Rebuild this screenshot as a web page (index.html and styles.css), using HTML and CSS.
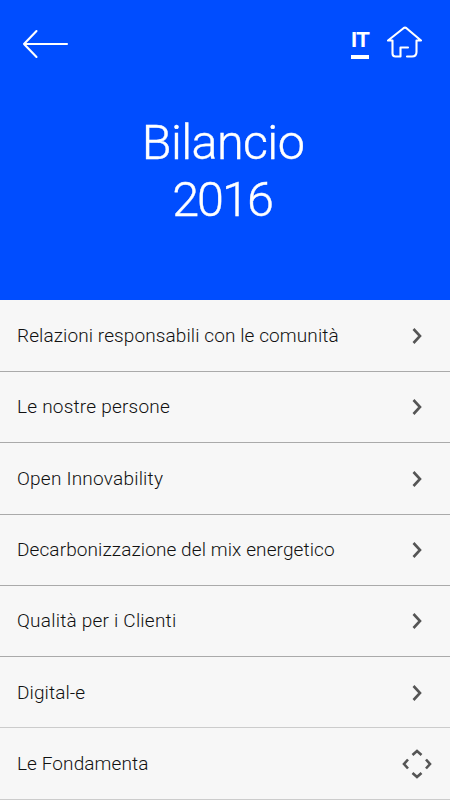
FILE: index.html
```html
<!DOCTYPE html>
<html lang="it">
<head>
<meta charset="utf-8">
<title>Bilancio 2016</title>
<link rel="stylesheet" href="styles.css">
</head>
<body>
<header class="hero">
  <nav class="bar">
    <svg class="back" width="48" height="30" viewBox="0 0 48 30"><path d="M45 15H2M14.500 2L2 15l12.500 13"/></svg>
    <span class="lang">IT</span>
    <svg class="home" width="38" height="34" viewBox="0 0 38 34"><path d="M21 31.500h5q4.500 0 4.500-4.500V15.500h4.500L20.500 3.200q-1.500-1.100-3 0L2 15.500h4.500V28.500q0 3 3 3H14.500V22.500h7.500"/></svg>
  </nav>
  <h1 class="title"><span class="word">Bilancio</span><span class="year">2016</span></h1>
</header>
<main class="list">
  <a class="row"><span class="label">Relazioni responsabili con le comunità</span><svg class="chevron" width="11" height="18" viewBox="0 0 11 18"><path d="M1.500 2L8 9l-6.500 7"/></svg></a>
  <a class="row raised"><span class="label wide">Le nostre persone</span><svg class="chevron" width="11" height="18" viewBox="0 0 11 18"><path d="M1.500 2L8 9l-6.500 7"/></svg></a>
  <a class="row"><span class="label wide">Open Innovability</span><svg class="chevron" width="11" height="18" viewBox="0 0 11 18"><path d="M1.500 2L8 9l-6.500 7"/></svg></a>
  <a class="row raised"><span class="label">Decarbonizzazione del mix energetico</span><svg class="chevron" width="11" height="18" viewBox="0 0 11 18"><path d="M1.500 2L8 9l-6.500 7"/></svg></a>
  <a class="row raised"><span class="label wide">Qualità per i Clienti</span><svg class="chevron" width="11" height="18" viewBox="0 0 11 18"><path d="M1.500 2L8 9l-6.500 7"/></svg></a>
  <a class="row"><span class="label">Digital-e</span><svg class="chevron" width="11" height="18" viewBox="0 0 11 18"><path d="M1.500 2L8 9l-6.500 7"/></svg></a>
  <a class="row"><span class="label">Le Fondamenta</span><svg class="move" width="30" height="30" viewBox="0 0 30 30"><path d="M10.500 6L15 2l4.500 4M10.500 24l4.500 4 4.500-4M6 10.500L2 15l4 4.500M24 10.500l4 4.500-4 4.500"/></svg></a>
</main>
</body>
</html>
```

FILE: styles.css
```css
* { box-sizing: border-box; }
body {
  margin: 0;
  height: 800px;
  overflow: hidden;
  background: #f7f7f7;
  color: #111;
  font-family: Roboto, "Liberation Sans", sans-serif;
  font-weight: 300;
}
.hero { height: 300px; background: #004dff; color: #fff; }
.bar {
  display: flex;
  align-items: flex-start;
  height: 114px;
  padding: 25px 26px 0 22px;
}
.back, .home { fill: none; stroke: #fff; stroke-width: 2.1; stroke-linecap: round; stroke-linejoin: round; }
.back { margin-top: 4px; }
.lang {
  width: 18px;
  height: 34px;
  margin-left: auto;
  margin-right: 17px;
  border-bottom: 4px solid #fff;
  font: bold 22px/30px "Liberation Sans", sans-serif;
  letter-spacing: -0.8px;
}
.title {
  margin: 0;
  font-size: 48.5px;
  line-height: 57px;
  font-weight: 300;
  text-align: center;
  -webkit-text-stroke: 0.4px #fff;
}
.word, .year { display: block; }
.word { letter-spacing: -0.6px; padding-right: 4px; }
.year { letter-spacing: -2px; padding-right: 6px; }
.list {
  display: grid;
  grid-template-rows: 72px 71px 72px 71px 71px 71px 72px;
}
.row {
  display: flex;
  align-items: center;
  justify-content: space-between;
  padding: 1px 27px 0 17px;
  border-bottom: 1px solid #aaa;
}
.raised { padding-top: 0; padding-bottom: 1px; }
.row:nth-child(n+6) { border-color: #ccc; }
.label { font-size: 19px; line-height: 24px; letter-spacing: 0.1px; white-space: nowrap; }
.wide { letter-spacing: 0.22px; }
.chevron, .move { fill: none; stroke: #555; stroke-width: 2.6; }
.move { margin-right: -9px; }
```
